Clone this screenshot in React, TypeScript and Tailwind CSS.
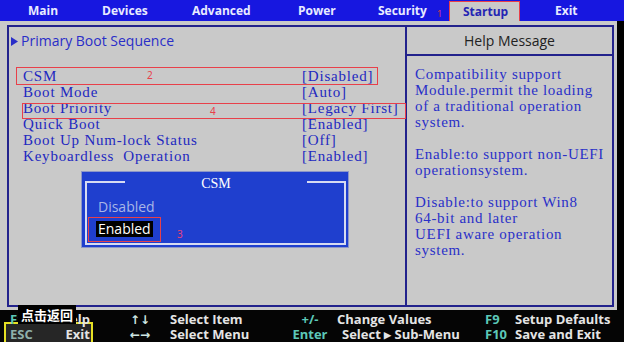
import React from 'react';

const rows = [
  { label: 'CSM', value: '[Disabled]' },
  { label: 'Boot Mode', value: '[Auto]' },
  { label: 'Boot Priority', value: '[Legacy First]' },
  { label: 'Quick Boot', value: '[Enabled]' },
  { label: 'Boot Up Num-lock Status', value: '[Off]' },
  { label: 'Keyboardless\u00a0 Operation', value: '[Enabled]' },
];

const help = [
  'Compatibility support',
  'Module.permit the loading',
  'of a traditional operation',
  'system.',
  '',
  'Enable:to support non-UEFI',
  'operationsystem.',
  '',
  'Disable:to support Win8',
  '64-bit and later',
  'UEFI aware operation',
  'system.',
];

const TopBar = () => (
  <div className="h-[21px] bg-[#1717e0] flex items-stretch font-['Open_Sans',sans-serif] font-bold text-[12px] text-[#e8ebff]">
    <div className="w-[90px] pl-[28px] flex items-center">Main</div>
    <div className="w-[90px] pl-[12px] flex items-center">Devices</div>
    <div className="w-[105px] pl-[12px] flex items-center">Advanced</div>
    <div className="w-[85px] pl-[13px] flex items-center">Power</div>
    <div className="w-[79px] pl-[8px] flex items-center relative">
      Security
      <span className="absolute left-[67px] top-[9px] text-[9px] font-normal leading-none text-[#e8404a]">1</span>
    </div>
    <div className="w-[71px] h-[21px] mt-[1px] bg-[#c9c9c9] border border-[#e8404a] pl-[13px] flex items-center text-[#2424b4]">
      Startup
    </div>
    <div className="flex-1 pl-[35px] flex items-center">Exit</div>
  </div>
);

const FooterRow = ({ k1, d1, k2, d2, k3, d3, k4, d4 }: Record<string, React.ReactNode>) => (
  <div className="h-[15px] flex items-center relative z-10 leading-none">
    <div className="w-[52px] pl-[10px] text-[#5cc8b8]">{k1}</div>
    <div className="w-[38px] text-right text-[#e4e4e4]">{d1}</div>
    <div className="w-[40px]" />
    <div className="w-[40px] text-[#cfe6e2] font-['DejaVu_Sans',sans-serif] text-[12px]">{k2}</div>
    <div className="w-[120px] text-[#e4e4e4]">{d2}</div>
    <div className="w-[40px] text-center text-[#5cc8b8]">{k3}</div>
    <div className="w-[155px] pl-[7px] text-[#e4e4e4]">{d3}</div>
    <div className="w-[30px] text-[#5cc8b8]">{k4}</div>
    <div className="flex-1 text-[#e4e4e4]">{d4}</div>
  </div>
);

const Footer = () => (
  <div className="h-[32px] pt-[2px] bg-[#050505] relative font-['Open_Sans',sans-serif] font-bold text-[13px]">
    <div className="absolute left-[4px] top-[12px] w-[89px] h-[24px] border-2 border-[#e6e024] bg-[#262626]" />
    <FooterRow k1="F1" d1="Help" k2="↑↓" d2="Select Item" k3="+/-" d3="Change Values" k4="F9" d4="Setup Defaults" />
    <FooterRow
      k1={<span className="text-[#8fb0aa]">ESC</span>}
      d1="Exit"
      k2="←→"
      d2="Select Menu"
      k3="Enter"
      d3={<span className="pl-[5px]">Select <span className="text-[9px] align-[1px]">▶</span> Sub-Menu</span>}
      k4="F10"
      d4="Save and Exit"
    />
    <div className="absolute left-[18px] top-[-5px] w-[58px] h-[19px] bg-black z-20 flex items-center justify-center text-white font-['Noto_Sans_CJK_SC',sans-serif] font-bold text-[13px] leading-none [text-shadow:0_0_2px_#000,0_0_2px_#000]">
      点击返回
    </div>
  </div>
);

const Popup = () => (
  <div className="absolute left-[72px] top-[144px] w-[268px] h-[77px] bg-[#1f3fce] border border-[#8c96c8]">
    <div className="absolute left-[3px] right-[2px] top-[9px] bottom-[2px] border-2 border-[#d6dbf2]" />
    <div className="absolute left-[43px] top-[3px] w-[182px] h-[16px] bg-[#1f3fce] flex items-center justify-center font-['Liberation_Serif',serif] text-[14px] text-white">
      CSM
    </div>
    <div className="absolute left-[16px] top-[26px] font-['Open_Sans',sans-serif] text-[14px] leading-[18px] text-[#a9b6e6]">
      Disabled
    </div>
    <div className="absolute left-[14px] top-[49px] px-[2px] h-[16px] bg-black flex items-center font-['Open_Sans',sans-serif] text-[14px] leading-none text-white">
      Enabled
    </div>
    <div className="absolute left-[6px] top-[45px] w-[73px] h-[25px] border border-[#e8404a]" />
    <span className="absolute left-[95px] top-[57px] text-[10px] leading-none text-[#e8407a]">3</span>
  </div>
);

export default function App() {
  return (
    <div className="w-[624px] h-[342px] flex flex-col bg-black overflow-hidden">
      <TopBar />
      <div className="h-[289px] flex">
        <div className="w-[617px] bg-[#c9c9c9] pl-[7px] pt-[4px]">
          <div className="w-[607px] h-[282px] border-2 border-[#22228c] flex">
            <div className="w-[396px] relative pt-[6px] text-[#2228c0]">
              <div className="h-[16px] flex items-center pl-[2px]">
                <svg width="7" height="9" viewBox="0 0 7 9" className="mr-[3px]">
                  <path d="M0 0 L7 4.5 L0 9 Z" fill="#2a2ec8" />
                </svg>
                <span className="font-['Open_Sans',sans-serif] text-[14px] leading-[16px] text-[#2a2ec8]">
                  Primary Boot Sequence
                </span>
              </div>
              <div className="mt-[19px] font-['Liberation_Serif',serif] text-[15px] tracking-[0.8px]">
                {rows.map((r) => (
                  <div key={r.label} className="h-[16px] flex items-center leading-[16px]">
                    <div className="w-[293px] pl-[14px] whitespace-pre">{r.label}</div>
                    <div>{r.value}</div>
                  </div>
                ))}
              </div>
              <div className="absolute left-[7px] top-[40px] w-[362px] h-[18px] border border-[#e8404a]" />
              <span className="absolute left-[138px] top-[43px] text-[10px] leading-none text-[#e8404a]">2</span>
              <div className="absolute left-[13px] top-[76px] w-[384px] h-[16px] border border-[#e8404a] z-10" />
              <span className="absolute left-[201px] top-[79px] text-[10px] leading-none text-[#e8404a]">4</span>
              <Popup />
            </div>
            <div className="w-[2px] bg-[#22228c]" />
            <div className="flex-1 flex flex-col">
              <div className="h-[27px] flex items-center justify-center font-['Open_Sans',sans-serif] text-[14px] text-[#222]">
                Help Message
              </div>
              <div className="h-[2px] bg-[#22228c]" />
              <div className="pl-[8px] pt-[10px] font-['Liberation_Serif',serif] text-[15px] tracking-[0.7px] text-[#2a30c8]">
                {help.map((l, i) => (
                  <div key={i} className="h-[16px] leading-[16px] whitespace-pre">{l}</div>
                ))}
              </div>
            </div>
          </div>
        </div>
      </div>
      <Footer />
    </div>
  );
}
